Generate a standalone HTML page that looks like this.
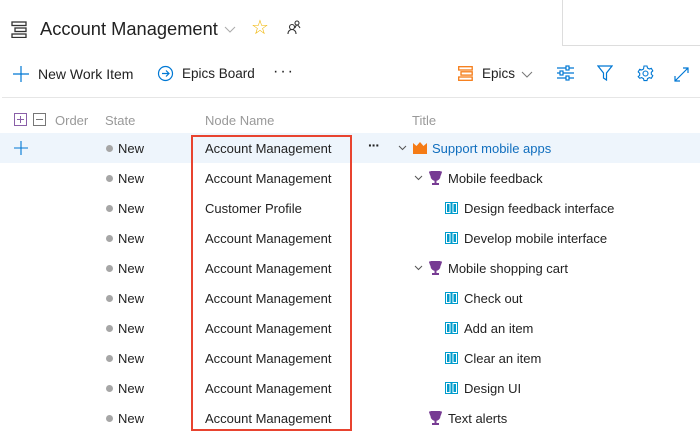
<!DOCTYPE html>
<html><head><meta charset="utf-8"><style>
*{margin:0;padding:0;box-sizing:border-box}
body{width:700px;height:437px;overflow:hidden;background:#fff;font-family:"Liberation Sans",sans-serif;color:#222;position:relative;font-size:13px}
.a{position:absolute;white-space:nowrap}
.row{position:absolute;left:0;width:700px;height:30px}
.dot{position:absolute;left:106px;top:12px;width:7px;height:7px;border-radius:50%;background:#a6a6a6}
.st{position:absolute;left:118px;top:8px}
.nn{position:absolute;left:205px;top:8px}
.t{position:absolute;top:8px}
.book{position:absolute;top:9px;width:13px;height:12px}
.chev{position:absolute;top:12px}
</style></head><body>
<svg class="a" style="left:11px;top:21px" width="16" height="17" viewBox="0 0 16 17" fill="none" stroke="#333" stroke-width="1.3"><rect x="1" y="1" width="14" height="3.5"/><rect x="4" y="7" width="11" height="3.5"/><rect x="1" y="13" width="14" height="3.5"/></svg>
<div class="a" style="left:40px;top:18px;font-size:18.3px;color:#222">Account Management</div>
<svg class="a" style="left:224px;top:26px" width="12" height="7" viewBox="0 0 12 7" fill="none" stroke="#aaa" stroke-width="1"><path d="M1 1l5 5 5-5"/></svg>
<div class="a" style="left:251px;top:15px;font-size:20px;color:#f0b400">☆</div>
<svg class="a" style="left:286px;top:19px" width="16" height="16" viewBox="0 0 16 16" fill="none" stroke="#333" stroke-width="1.1"><circle cx="6" cy="8" r="2.5"/><path d="M2 15c0-3 2-4.5 4-4.5s4 1.5 4 4.5"/><circle cx="11" cy="4" r="2"/><path d="M9 9c.5-2 1.5-3 2-3s2 1 3 3"/></svg>
<div class="a" style="left:562px;top:0;width:138px;height:46px;border-left:1px solid #ddd;border-bottom:1px solid #ddd"></div>
<svg class="a" style="left:13px;top:66px" width="16" height="16" viewBox="0 0 16 16" stroke="#0078d4" stroke-width="1.2"><path d="M8 0v16M0 8h16"/></svg>
<div class="a" style="left:38px;top:66px;font-size:14px">New Work Item</div>
<svg class="a" style="left:157px;top:65px" width="17" height="17" viewBox="0 0 17 17" fill="none" stroke="#0078d4" stroke-width="1.2"><circle cx="8.5" cy="8.5" r="7"/><path d="M5 8.5h7M9 5.5l3 3-3 3"/></svg>
<div class="a" style="left:182px;top:66px;font-size:13.5px">Epics Board</div>
<div class="a" style="left:273px;top:63px;font-size:16px;letter-spacing:2px">···</div>
<svg class="a" style="left:458px;top:66px" width="15" height="15" viewBox="0 0 15 15" fill="none" stroke="#f57b15" stroke-width="1.3"><rect x="0.7" y="0.7" width="13.5" height="3.3"/><rect x="3" y="5.8" width="11.2" height="3.3"/><rect x="0.7" y="11" width="13.5" height="3.3"/></svg>
<div class="a" style="left:482px;top:66px;font-size:13.5px">Epics</div>
<svg class="a" style="left:521px;top:71px" width="12" height="7" viewBox="0 0 12 7" fill="none" stroke="#777" stroke-width="1"><path d="M1 1l5 5 5-5"/></svg>
<svg class="a" style="left:557px;top:65px" width="17" height="16" viewBox="0 0 17 16" fill="none" stroke="#0078d4" stroke-width="1.2"><path d="M0 3h17M0 8h17M0 13h17"/><rect x="9" y="1" width="3" height="4" fill="#fff"/><rect x="3" y="6" width="3" height="4" fill="#fff"/><rect x="9" y="11" width="3" height="4" fill="#fff"/></svg>
<svg class="a" style="left:597px;top:65px" width="16" height="16" viewBox="0 0 16 16" fill="none" stroke="#0078d4" stroke-width="1.2"><path d="M1 1h14L9.5 8v7l-3-2V8z"/></svg>
<svg class="a" style="left:637px;top:65px" width="17" height="17" viewBox="0 0 17 17" fill="none" stroke="#0078d4" stroke-width="1.1"><circle cx="8.5" cy="8.5" r="2.5"/><path d="M7 1h3l.5 2 1.8 1 2-.7 1.5 2.6-1.5 1.4v2l1.5 1.4-1.5 2.6-2-.7-1.8 1-.5 2H7l-.5-2-1.8-1-2 .7L1.2 11.7l1.5-1.4v-2L1.2 6.9 2.7 4.3l2 .7 1.8-1z"/></svg>
<svg class="a" style="left:674px;top:67px" width="15" height="15" viewBox="0 0 15 15" fill="none" stroke="#0078d4" stroke-width="1.2"><path d="M1 14L14 1M1 9v5h5M9 1h5v5"/></svg>
<div class="a" style="left:2px;top:97px;width:698px;height:1px;background:#e6e6e6"></div>
<svg class="a" style="left:14px;top:113px" width="13" height="13" viewBox="0 0 13 13" fill="none" stroke="#8a5fa8"><rect x=".5" y=".5" width="12" height="12"/><path d="M6.5 3v7M3 6.5h7"/></svg>
<svg class="a" style="left:33px;top:113px" width="13" height="13" viewBox="0 0 13 13" fill="none" stroke="#777"><rect x=".5" y=".5" width="12" height="12"/><path d="M3 6.5h7"/></svg>
<div class="a" style="left:55px;top:113px;color:#999">Order</div>
<div class="a" style="left:105px;top:113px;color:#999">State</div>
<div class="a" style="left:205px;top:113px;color:#999">Node Name</div>
<div class="a" style="left:412px;top:113px;color:#999">Title</div>
<div class="row" style="top:133px;background:#eef5fc"><svg class="a" style="left:14px;top:8px" width="14" height="14" viewBox="0 0 14 14" stroke="#0078d4" stroke-width="1.1"><path d="M7 0v14M0 7h14"/></svg><div class="dot"></div><div class="st">New</div><div class="nn">Account Management</div><div class="a" style="left:368px;top:4px;font-size:14px;font-weight:bold;letter-spacing:-1px">···</div>
<svg class="chev" style="left:398px" width="9" height="6" viewBox="0 0 9 6" fill="none" stroke="#555"><path d="M1 1l3.5 3.5L8 1"/></svg>
<svg class="a" style="left:413px;top:9px" width="14" height="12" viewBox="0 0 14 12"><path d="M0 1l3.5 3L7 0l3.5 4L14 1v11H0z" fill="#f57b15"/></svg><div class="t" style="left:432px;color:#106ebe">Support mobile apps</div></div>
<div id="rows"></div>
<script>
var d=[["Account Management",1,"Mobile feedback"],["Customer Profile",2,"Design feedback interface"],["Account Management",2,"Develop mobile interface"],["Account Management",1,"Mobile shopping cart"],["Account Management",2,"Check out"],["Account Management",2,"Add an item"],["Account Management",2,"Clear an item"],["Account Management",2,"Design UI"],["Account Management",3,"Text alerts"]];
var h="";d.forEach(function(r,i){var top=163+i*30;var ic="";
if(r[1]==1||r[1]==3){ic=(r[1]==1?'<svg class="chev" style="left:414px" width="9" height="6" viewBox="0 0 9 6" fill="none" stroke="#555"><path d="M1 1l3.5 3.5L8 1"/></svg>':'')+'<svg class="a" style="left:429px;top:8px" width="13" height="14" viewBox="0 0 13 14"><path d="M2 0h9v5a4.5 4.5 0 0 1-9 0z M0 1h2v3H1 M13 1h-2v3h1" fill="#773b93" stroke="#773b93"/><rect x="5.5" y="9" width="2" height="3" fill="#773b93"/><rect x="3" y="12" width="7" height="2" fill="#773b93"/></svg><div class="t" style="left:448px">'+r[2]+'</div>';}
else{ic='<svg class="book" style="left:445px" viewBox="0 0 13 12"><rect x="0.5" y="0.5" width="5.5" height="11" fill="none" stroke="#009ccc"/><rect x="7" y="0.5" width="5.5" height="11" fill="none" stroke="#009ccc"/><rect x="2" y="2" width="2.5" height="8" fill="#009ccc"/><rect x="8.5" y="2" width="2.5" height="8" fill="#009ccc"/></svg><div class="t" style="left:464px">'+r[2]+'</div>';}
h+='<div class="row" style="top:'+top+'px"><div class="dot"></div><div class="st">New</div><div class="nn">'+r[0]+'</div>'+ic+'</div>';});
document.getElementById("rows").innerHTML=h;
</script>
<div class="a" style="left:191px;top:135px;width:161px;height:296px;border:2px solid #e8432f"></div>
</body></html>
